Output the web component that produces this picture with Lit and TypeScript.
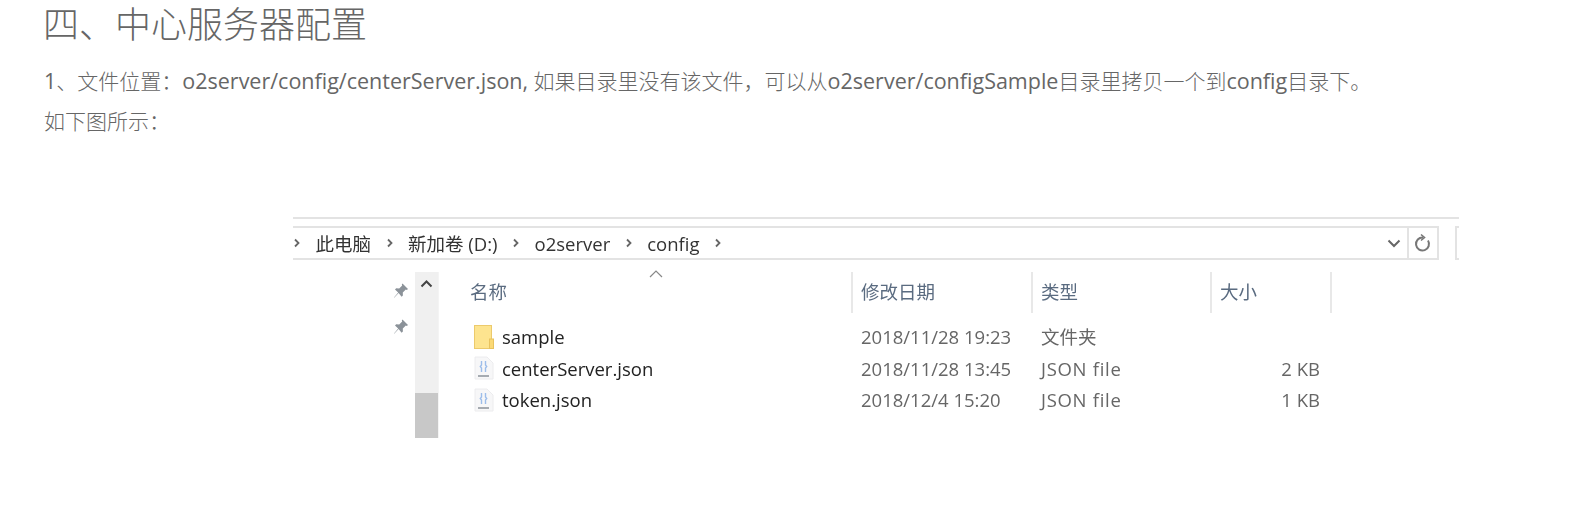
import { LitElement, css, html, svg } from "lit";
import { customElement } from "lit/decorators.js";

const chevron = svg`<svg class="crumb-sep" width="8" height="10" viewBox="0 0 8 10"><path d="M2 1.5 5.5 5 2 8.5" fill="none" stroke="#666" stroke-width="1.8"/></svg>`;

const pin = html`<svg class="pin" width="18" height="18" viewBox="0 0 18 18"><path d="M10.5 1.5 16 7l-1.2 1-1-.4-3 3 .1 3-1.3 1.2L6.6 11 2.2 15.8 2 15.5 6.2 10.5 3 7.6 4.2 6.3l3 .1 3-3-.4-1z" fill="#8b9299"/></svg>`;

const folderIcon = html`<svg width="20" height="24" viewBox="0 0 20 24"><rect x="0.5" y="0.5" width="17" height="23" fill="#fde48f" stroke="#ecca6c"/><rect x="15.5" y="14" width="4" height="9.5" fill="#fbd976" stroke="#e8c35f"/></svg>`;

const jsonIcon = html`<svg width="20" height="24" viewBox="0 0 20 24"><path d="M1 1h12l6 6v16H1z" fill="#f7f7f8" stroke="#ececee"/><path d="M7.5 5v4l-1.2 1.5L7.5 12v4M11.5 5v4l1.2 1.5-1.2 1.5v4" fill="none" stroke="#9dbdea" stroke-width="1.4"/><rect x="4" y="19" width="11" height="2" fill="#a6abb1"/></svg>`;

const rows = [
  { name: "sample", date: "2018/11/28 19:23", type: "文件夹", typeClass: "", size: "", icon: folderIcon },
  { name: "centerServer.json", date: "2018/11/28 13:45", type: "JSON file", typeClass: "latin", size: "2 KB", icon: jsonIcon },
  { name: "token.json", date: "2018/12/4 15:20", type: "JSON file", typeClass: "latin", size: "1 KB", icon: jsonIcon },
];

@customElement("app-root")
export class AppRoot extends LitElement {
  static styles = css`
    :host {
      display: block;
      height: 510px;
      overflow: hidden;
      background: #fff;
      color: #666;
      font-family: "Open Sans", "Noto Sans CJK SC", sans-serif;
    }
    .page {
      padding-left: 44px;
    }
    h1 {
      margin: 0 0 0 -1px;
      font-size: 36px;
      font-weight: 300;
      line-height: 50px;
    }
    p {
      margin: 0;
      font-size: 21px;
      font-weight: 300;
      line-height: 40px;
    }
    .en {
      font-size: 21.5px;
      font-weight: 400;
    }
    .lines {
      margin-top: 11px;
    }
    .explorer {
      margin: 76px 0 0 249px;
      width: 1166px;
      color: #333;
      font-size: 18.5px;
      filter: blur(0.5px);
    }
    .top-line {
      height: 2px;
      background: #e3e3e3;
    }
    .toolbar {
      display: flex;
      gap: 16px;
      margin-top: 7px;
    }
    .address {
      flex: 1;
      height: 34px;
      display: flex;
      align-items: center;
      box-sizing: border-box;
      border: 2px solid #e3e3e3;
      border-left: none;
    }
    .crumbs {
      flex: 1;
      display: flex;
      align-items: center;
      gap: 14.5px;
      white-space: nowrap;
    }
    .drop {
      width: 27px;
      display: flex;
      justify-content: center;
    }
    .refresh {
      width: 28px;
      height: 30px;
      display: flex;
      align-items: center;
      justify-content: center;
      border-left: 2px solid #e3e3e3;
    }
    .search {
      width: 4px;
      height: 34px;
      box-sizing: border-box;
      border: 2px solid #e3e3e3;
      border-right: none;
    }
    .body {
      display: grid;
      grid-template-columns: 122px 23px 1fr;
      margin-top: 12px;
    }
    .pins {
      display: flex;
      flex-direction: column;
      align-items: flex-end;
      gap: 18px;
      padding: 10px 5px 0 0;
    }
    .scroll {
      height: 166px;
      display: flex;
      flex-direction: column;
      background: #f0f0f0;
      align-items: center;
    }
    .scroll svg {
      margin-top: 8px;
    }
    .thumb {
      margin-top: auto;
      width: 100%;
      height: 45px;
      background: #c8c8c8;
    }
    .list {
      padding-left: 31px;
      border-left: 1px solid #f4f4f4;
    }
    .head,
    .row {
      display: grid;
      grid-template-columns: 383px 180px 179px 120px;
    }
    .head {
      position: relative;
      height: 41px;
      color: #5a6b80;
    }
    .head div {
      padding-top: 4px;
      border-right: 2px solid #e8e8e8;
      line-height: 32px;
    }
    .head div + div {
      padding-left: 8px;
    }
    .sort {
      position: absolute;
      left: 179px;
      top: -2px;
    }
    .files {
      margin-top: 8px;
    }
    .row {
      height: 31.5px;
      align-items: center;
      line-height: 31px;
      color: #666;
    }
    .row > div + div {
      padding-left: 8px;
    }
    .name {
      display: flex;
      align-items: center;
      gap: 8px;
      padding-left: 4px;
      color: #222;
    }
    .latin {
      letter-spacing: 0.7px;
    }
    .size {
      text-align: right;
      padding-right: 12px;
    }
  `;

  render() {
    return html`
      <div class="page">
        <h1>四、中心服务器配置</h1>
        <div class="lines">
          <p><span class="en">1</span>、文件位置：<span class="en">o2server/config/centerServer.json,</span> 如果目录里没有该文件，可以从<span class="en">o2server/configSample</span>目录里拷贝一个到<span class="en">config</span>目录下。</p>
          <p>如下图所示：</p>
        </div>
        <div class="explorer">
          <div class="top-line"></div>
          <div class="toolbar">
            <div class="address">
              <div class="crumbs">
                ${chevron}<span>此电脑</span>${chevron}<span>新加卷 (D:)</span>${chevron}<span>o2server</span>${chevron}<span>config</span>${chevron}
              </div>
              <div class="drop">
                <svg width="14" height="9" viewBox="0 0 14 9"><path d="M1.5 1.5 7 7l5.5-5.5" fill="none" stroke="#666" stroke-width="2"/></svg>
              </div>
              <div class="refresh">
                <svg width="18" height="20" viewBox="0 0 18 20"><path d="M14 7.5A6.5 6.5 0 1 1 9 4.5" fill="none" stroke="#777" stroke-width="2"/><path d="M7 1.5 10.5 4.5 7 7.5" fill="none" stroke="#777" stroke-width="1.6"/></svg>
              </div>
            </div>
            <div class="search"></div>
          </div>
          <div class="body">
            <div class="pins">${pin}${pin}</div>
            <div class="scroll">
              <svg width="13" height="8" viewBox="0 0 13 8"><path d="M1.5 6.5 6.5 1.5l5 5" fill="none" stroke="#444" stroke-width="2"/></svg>
              <div class="thumb"></div>
            </div>
            <div class="list">
              <div class="head">
                <svg class="sort" width="14" height="8" viewBox="0 0 14 8"><path d="M1 7 7 1l6 6" fill="none" stroke="#888" stroke-width="1.2"/></svg>
                <div>名称</div>
                <div>修改日期</div>
                <div>类型</div>
                <div>大小</div>
              </div>
              <div class="files">
                ${rows.map(
                  (r) => html`
                    <div class="row">
                      <div class="name">${r.icon}<span>${r.name}</span></div>
                      <div>${r.date}</div>
                      <div class=${r.typeClass}>${r.type}</div>
                      <div class="size">${r.size}</div>
                    </div>
                  `
                )}
              </div>
            </div>
          </div>
        </div>
      </div>
    `;
  }
}
